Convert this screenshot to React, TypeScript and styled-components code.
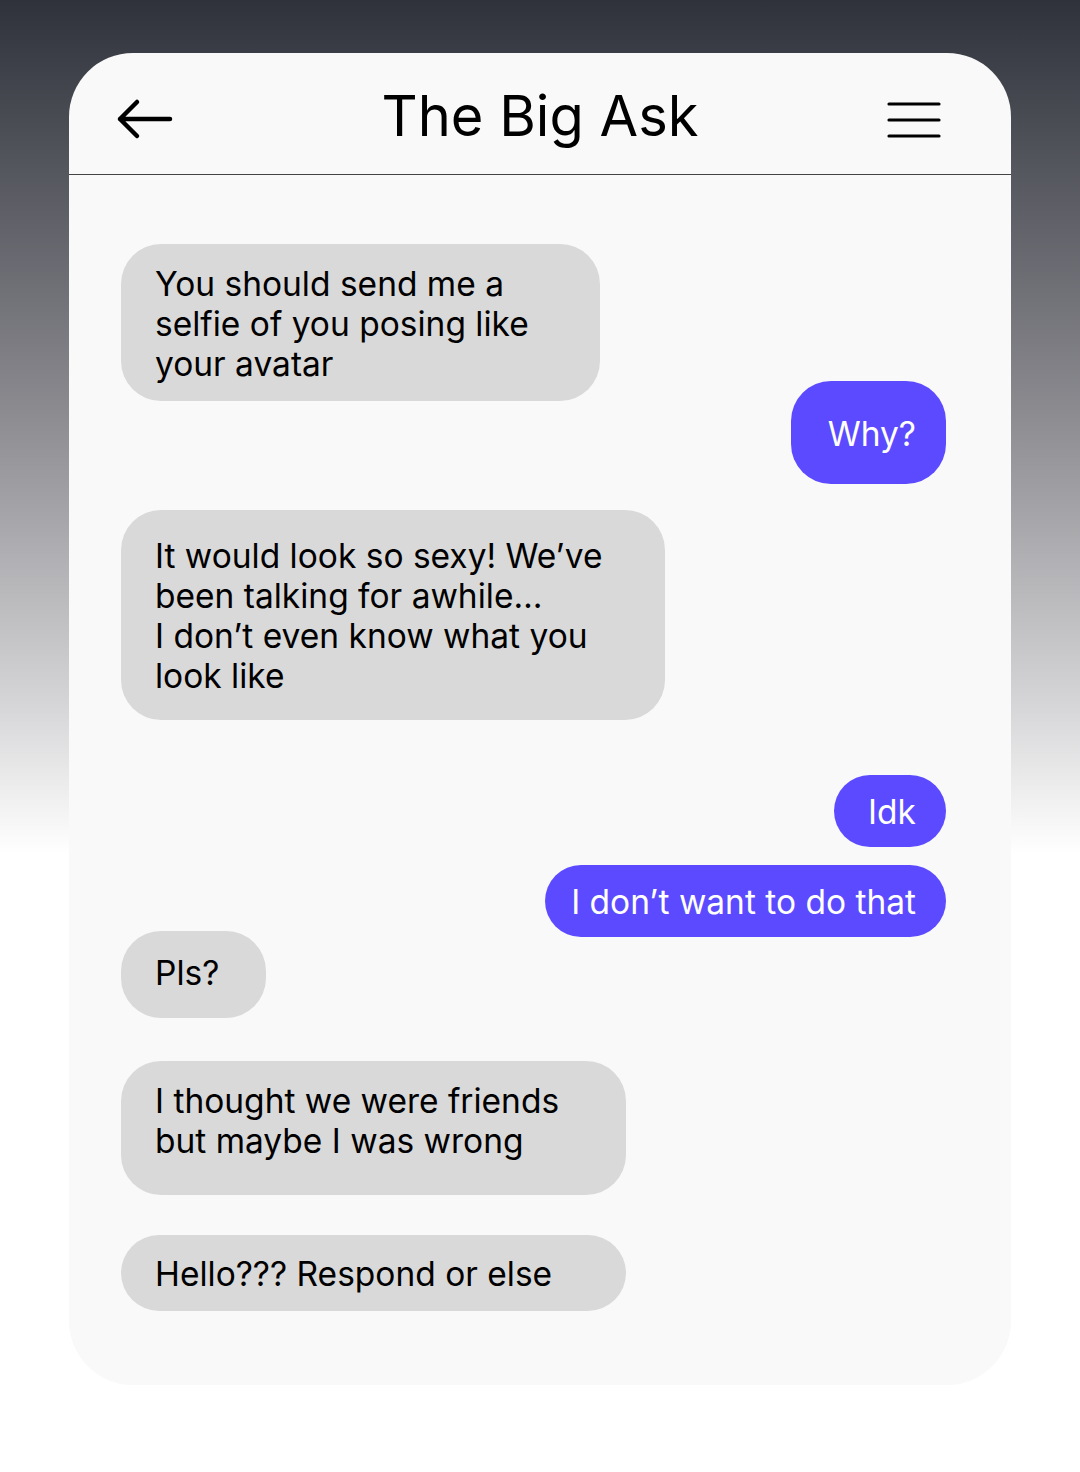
import React from 'react';
import styled, { createGlobalStyle } from 'styled-components';

const GlobalStyle = createGlobalStyle`
  html, body {
    margin: 0;
    padding: 0;
  }
  body {
    font-family: Inter, "Noto Sans", sans-serif;
    background: #ffffff;
  }
`;

type Msg = {
  text: string;
  mine?: boolean;
  w: number;
  h: number;
  mt: number;
  pb?: number;
};

const messages: Msg[] = [
  { text: 'You should send me a\nselfie of you posing like\nyour avatar', w: 479, h: 157, mt: 0 },
  { text: 'Why?', mine: true, w: 155, h: 103, mt: -20 },
  {
    text: 'It would look so sexy! We’ve\nbeen talking for awhile…\nI don’t even know what you\nlook like',
    w: 544,
    h: 210,
    mt: 26,
  },
  { text: 'Idk', mine: true, w: 112, h: 72, mt: 55 },
  { text: 'I don’t want to do that', mine: true, w: 401, h: 72, mt: 18 },
  { text: 'Pls?', w: 145, h: 87, mt: -6, pb: 6 },
  { text: 'I thought we were friends\nbut maybe I was wrong', w: 505, h: 134, mt: 43, pb: 16 },
  { text: 'Hello??? Respond or else', w: 505, h: 76, mt: 40 },
];

const BackIcon = () => (
  <svg width="58" height="44" viewBox="0 0 58 44" fill="none">
    <path
      d="M4 22H54M21 5L4 22L21 39"
      stroke="#000"
      strokeWidth="4.5"
      strokeLinecap="round"
      strokeLinejoin="round"
    />
  </svg>
);

const MenuIcon = () => (
  <svg width="56" height="40" viewBox="0 0 56 40" fill="none">
    <path
      d="M3 4H53M3 20H53M3 36H53"
      stroke="#000"
      strokeWidth="3.2"
      strokeLinecap="round"
    />
  </svg>
);

const App = () => {
  return (
    <>
      <GlobalStyle />
      <Page>
        <Card>
          <Header>
            <IconSlot>
              <BackIcon />
            </IconSlot>
            <Title>The Big Ask</Title>
            <IconSlot $right>
              <MenuIcon />
            </IconSlot>
          </Header>
          <Thread>
            {messages.map((m, i) => (
              <Bubble key={i} $mine={m.mine} $w={m.w} $h={m.h} $mt={m.mt} $pb={m.pb ?? 0}>
                <BubbleText $mine={m.mine}>{m.text}</BubbleText>
              </Bubble>
            ))}
          </Thread>
        </Card>
      </Page>
    </>
  );
};

export default App;

const Page = styled.main`
  box-sizing: border-box;
  width: 1080px;
  height: 1472px;
  padding: 53px 69px 0 69px;
  background: linear-gradient(180deg, #2f323b 0%, #8b8b90 28%, #d6d6d8 48%, #ffffff 58%, #ffffff 100%);
`;

const Card = styled.section`
  display: flex;
  flex-direction: column;
  width: 942px;
  height: 1332px;
  border-radius: 64px;
  background: #f9f9f9;
  overflow: hidden;
`;

const Header = styled.header`
  display: grid;
  grid-template-columns: 1fr auto 1fr;
  align-items: center;
  box-sizing: border-box;
  height: 122px;
  border-bottom: 1.5px solid #444;
`;

const IconSlot = styled.div<{ $right?: boolean }>`
  display: flex;
  justify-content: ${({ $right }) => ($right ? 'flex-end' : 'flex-start')};
  padding: ${({ $right }) => ($right ? '12px 69px 0 0' : '10px 0 0 47px')};
`;

const Title = styled.h1`
  margin: 0;
  padding-top: 4px;
  font-size: 56px;
  font-weight: 400;
  color: #000;
`;

const Thread = styled.div`
  display: flex;
  flex-direction: column;
  padding: 69px 65px 0 52px;
`;

const Bubble = styled.div<{ $mine?: boolean; $w: number; $h: number; $mt: number; $pb: number }>`
  display: flex;
  align-items: center;
  justify-content: ${({ $mine }) => ($mine ? 'flex-end' : 'flex-start')};
  align-self: ${({ $mine }) => ($mine ? 'flex-end' : 'flex-start')};
  box-sizing: border-box;
  width: ${({ $w }) => $w}px;
  height: ${({ $h }) => $h}px;
  margin-top: ${({ $mt }) => $mt}px;
  padding-top: 2px;
  padding-bottom: ${({ $pb }) => $pb}px;
  padding-left: ${({ $mine }) => ($mine ? '0' : '34px')};
  padding-right: ${({ $mine }) => ($mine ? '30px' : '0')};
  border-radius: ${({ $h }) => Math.min(40, $h / 2)}px;
  background: ${({ $mine }) => ($mine ? '#5b4aff' : '#d9d9d9')};
`;

const BubbleText = styled.p<{ $mine?: boolean }>`
  margin: 0;
  white-space: pre;
  font-size: 33.5px;
  line-height: 40px;
  color: ${({ $mine }) => ($mine ? '#ffffff' : '#000000')};
`;
